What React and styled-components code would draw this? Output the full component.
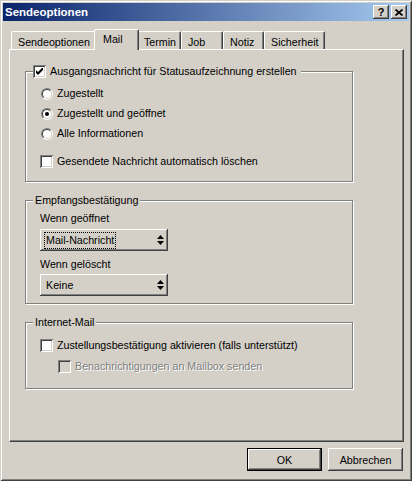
import React from 'react'
import styled, { createGlobalStyle } from 'styled-components'

const GlobalStyle = createGlobalStyle`
  html, body {
    margin: 0;
    padding: 0;
    background: #d4d0c8;
  }
  body {
    font-family: "Liberation Sans", Arial, sans-serif;
    font-size: 10.7px;
    color: #000;
  }
`

const tabs = [
  { label: 'Sendeoptionen', w: 85 },
  { label: 'Mail', w: 41, active: true },
  { label: 'Termin', w: 44 },
  { label: 'Job', w: 42 },
  { label: 'Notiz', w: 41 },
  { label: 'Sicherheit', w: 61 },
]

const App = () => {
  return (
    <>
      <GlobalStyle />
      <Window>
        <TitleBar>
          <Title>Sendeoptionen</Title>
          <CaptionButton>?</CaptionButton>
          <CaptionButton>
            <svg width="8" height="7" viewBox="0 0 8 7">
              <path d="M0.5 0.5 L7.5 6.5 M7.5 0.5 L0.5 6.5" stroke="#000" strokeWidth="1.7" />
            </svg>
          </CaptionButton>
        </TitleBar>

        <TabStrip>
          {tabs.map(t => (
            <Tab key={t.label} $w={t.w} $active={t.active}>{t.label}</Tab>
          ))}
        </TabStrip>

        <Pane>
          <Group $top={9} $bottom={13}>
            <Legend $check>
              <LegendInner>
                <CheckBox $checked><CheckMark /></CheckBox>
                <Label>Ausgangsnachricht für Statusaufzeichnung erstellen</Label>
              </LegendInner>
            </Legend>
            <Body>
              <Row><Radio /><Label>Zugestellt</Label></Row>
              <Row $gap={7}><Radio $checked /><Label>Zugestellt und geöffnet</Label></Row>
              <Row $gap={7}><Radio /><Label>Alle Informationen</Label></Row>
              <Row $gap={15}><CheckBox /><Label>Gesendete Nachricht automatisch löschen</Label></Row>
            </Body>
          </Group>

          <Group $top={5} $bottom={7}>
            <Legend><LegendInner>Empfangsbestätigung</LegendInner></Legend>
            <Body>
              <FieldLabel>Wenn geöffnet</FieldLabel>
              <Select $gap={4}>
                <SelectText $focus>Mail-Nachricht</SelectText>
                <SpinArrows />
              </Select>
              <FieldLabel $gap={7}>Wenn gelöscht</FieldLabel>
              <Select $gap={3}>
                <SelectText>Keine</SelectText>
                <SpinArrows />
              </Select>
            </Body>
          </Group>

          <Group $top={10} $bottom={15}>
            <Legend><LegendInner>Internet-Mail</LegendInner></Legend>
            <Body>
              <Row><CheckBox /><Label>Zustellungsbestätigung aktivieren (falls unterstützt)</Label></Row>
              <Row $gap={8} $indent={18} $disabled>
                <CheckBox $disabled /><Label>Benachrichtigungen an Mailbox senden</Label>
              </Row>
            </Body>
          </Group>
        </Pane>

        <ButtonRow>
          <Button $default>OK</Button>
          <Button>Abbrechen</Button>
        </ButtonRow>
      </Window>
    </>
  )
}

const CheckMark = () => (
  <svg width="7" height="7" viewBox="0 0 7 7">
    <polygon points="0,2 2,4 6,0 7,0 7,2 2,7 0,5" fill="#000" />
  </svg>
)

const SpinArrows = () => (
  <Arrows width="7" height="11" viewBox="0 0 7 11">
    <polygon points="3.5,0 7,4 0,4" fill="#000" />
    <polygon points="0,6 7,6 3.5,10" fill="#000" />
  </Arrows>
)

const Window = styled.div`
  box-sizing: border-box;
  width: 412px;
  height: 481px;
  padding: 3px;
  background: #d4d0c8;
  box-shadow: inset 1px 1px 0 #d4d0c8, inset -1px -1px 0 #404040,
    inset 2px 2px 0 #fff, inset -2px -2px 0 #808080;
  display: flex;
  flex-direction: column;
`

const TitleBar = styled.div`
  box-sizing: border-box;
  flex: none;
  height: 18px;
  display: flex;
  align-items: flex-start;
  padding: 2px 2px 0 2px;
  background: linear-gradient(to right, #0a246a, #a6caf0);
`

const Title = styled.div`
  flex: 1;
  color: #fff;
  font-weight: bold;
  font-size: 11.5px;
  line-height: 14px;
`

const CaptionButton = styled.div`
  box-sizing: border-box;
  width: 16px;
  height: 14px;
  margin-left: 2px;
  background: #d4d0c8;
  box-shadow: inset -1px -1px 0 #404040, inset 1px 1px 0 #fff, inset -2px -2px 0 #808080;
  display: flex;
  align-items: center;
  justify-content: center;
  font-weight: bold;
  font-size: 11px;
  line-height: 12px;
`

const TabStrip = styled.div`
  flex: none;
  display: flex;
  align-items: flex-end;
  height: 20px;
  margin: 8px 0 0 8px;
  position: relative;
  z-index: 1;
`

const Tab = styled.div`
  box-sizing: border-box;
  flex: none;
  width: ${p => (p.$active ? p.$w + 4 : p.$w)}px;
  height: ${p => (p.$active ? 21 : 18)}px;
  margin: 0 ${p => (p.$active ? -2 : 0)}px ${p => (p.$active ? -1 : 0)}px;
  padding: ${p => (p.$active ? '2px 0 0 8px' : '3px 0 0 6px')};
  line-height: 14px;
  white-space: nowrap;
  background: #d4d0c8;
  border-top: 1px solid #fff;
  border-left: 1px solid #fff;
  border-right: 1px solid #404040;
  border-radius: 2px 2px 0 0;
  box-shadow: inset -1px 0 0 #808080;
  position: relative;
  z-index: ${p => (p.$active ? 2 : 1)};
`

const Pane = styled.div`
  box-sizing: border-box;
  flex: none;
  height: 393px;
  margin: 0 5px 0 6px;
  padding: 15px 0 0 15px;
  border-top: 1px solid #fff;
  border-left: 1px solid #fff;
  border-right: 1px solid #404040;
  border-bottom: 1px solid #404040;
  box-shadow: inset -1px -1px 0 #808080;
  display: flex;
  flex-direction: column;
  align-items: flex-start;
  gap: 12px;
`

const Group = styled.fieldset`
  box-sizing: border-box;
  width: 328px;
  min-width: 0;
  margin: 0;
  padding: ${p => p.$top}px 0 ${p => p.$bottom}px 7px;
  border: 1px solid #808080;
  box-shadow: 1px 1px 0 #fff, inset 1px 1px 0 #fff;
`

const Legend = styled.legend`
  padding: ${p => (p.$check ? '0 4px 0 0' : '0 2px')};
  margin: 0;
  background: #d4d0c8;
`

const LegendInner = styled.span`
  display: flex;
  align-items: center;
  height: 13px;
  line-height: 13px;
  white-space: nowrap;
`

const Body = styled.div`
  padding-left: 7px;
  display: flex;
  flex-direction: column;
  align-items: flex-start;
`

const Row = styled.div`
  display: flex;
  align-items: center;
  height: 13px;
  margin-top: ${p => p.$gap || 0}px;
  padding-left: ${p => p.$indent || 0}px;
  white-space: nowrap;
  color: ${p => (p.$disabled ? '#808080' : '#000')};
  text-shadow: ${p => (p.$disabled ? '1px 1px 0 #fff' : 'none')};
`

const Label = styled.span`
  margin-left: 4px;
  line-height: 13px;
`

const CheckBox = styled.span`
  box-sizing: border-box;
  flex: none;
  width: 13px;
  height: 13px;
  background: ${p => (p.$disabled ? '#d4d0c8' : '#fff')};
  box-shadow: inset 1px 1px 0 #808080, inset -1px -1px 0 #fff,
    inset 2px 2px 0 #404040, inset -2px -2px 0 #d4d0c8;
  display: flex;
  align-items: center;
  justify-content: center;
`

const Radio = styled.span`
  box-sizing: border-box;
  flex: none;
  width: 12px;
  height: 12px;
  margin-left: 1px;
  border-radius: 50%;
  border: 1px solid;
  border-color: #808080 #fff #fff #808080;
  display: flex;

  &::before {
    content: '';
    box-sizing: border-box;
    flex: 1;
    border-radius: 50%;
    border: 1px solid;
    border-color: #404040 #d4d0c8 #d4d0c8 #404040;
    background: #fff;
  }

  &::after {
    content: '';
    display: ${p => (p.$checked ? 'block' : 'none')};
    position: absolute;
    width: 4px;
    height: 4px;
    margin: 3px 0 0 3px;
    border-radius: 50%;
    background: #000;
  }
`

const FieldLabel = styled.div`
  line-height: 13px;
  margin-top: ${p => p.$gap || 0}px;
  white-space: nowrap;
`

const Select = styled.div`
  box-sizing: border-box;
  width: 128px;
  height: 22px;
  margin-top: ${p => p.$gap || 0}px;
  padding: 0 4px 0 4px;
  display: flex;
  align-items: center;
  background: #d4d0c8;
  box-shadow: inset -1px -1px 0 #404040, inset 1px 1px 0 #fff, inset -2px -2px 0 #808080;
`

const SelectText = styled.span`
  box-sizing: border-box;
  height: 17px;
  line-height: 15px;
  padding: 0 1px;
  border: 1px dotted ${p => (p.$focus ? '#000' : 'transparent')};
  white-space: nowrap;
`

const Arrows = styled.svg`
  margin-left: auto;
  margin-right: 0px;
`

const ButtonRow = styled.div`
  flex: none;
  display: flex;
  justify-content: flex-end;
  gap: 6px;
  margin-top: 6px;
  padding-right: 6px;
`

const Button = styled.div`
  box-sizing: border-box;
  width: 75px;
  height: 23px;
  display: flex;
  align-items: center;
  justify-content: center;
  background: #d4d0c8;
  border: ${p => (p.$default ? '1px solid #000' : 'none')};
  box-shadow: ${p =>
    p.$default
      ? 'inset -1px -1px 0 #404040, inset 1px 1px 0 #fff, inset -2px -2px 0 #808080'
      : 'inset -1px -1px 0 #404040, inset 1px 1px 0 #fff, inset -2px -2px 0 #808080'};
`

export default App
